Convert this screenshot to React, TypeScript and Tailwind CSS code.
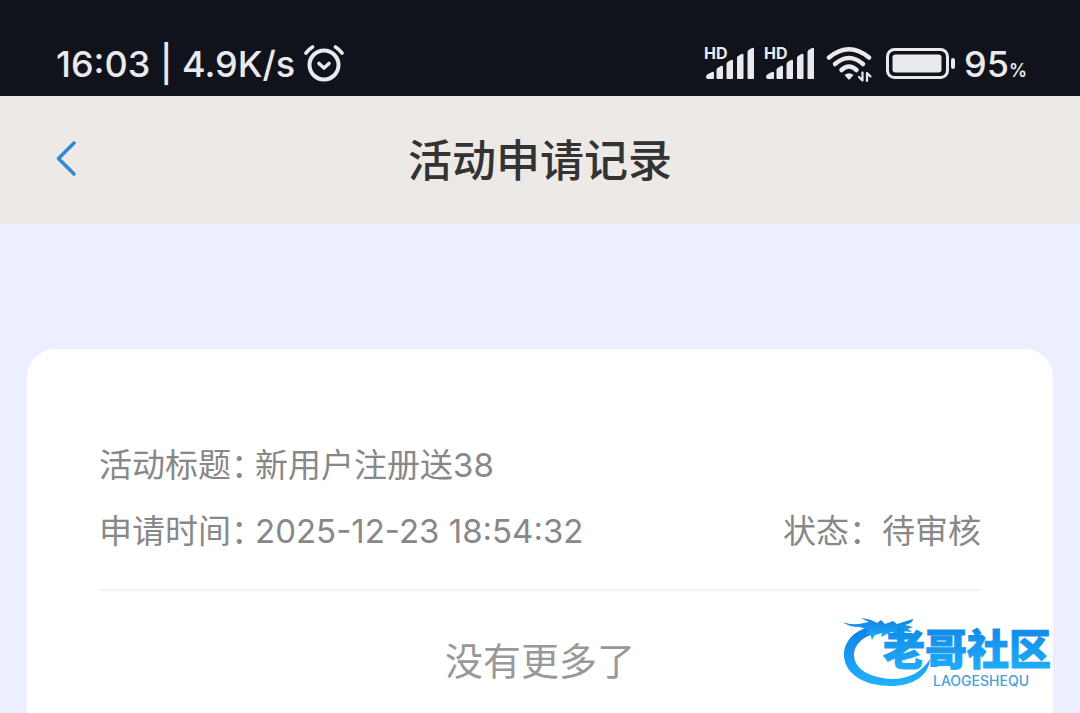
const record = {
	title: "新用户注册送38",
	time: "2025-12-23 18:54:32",
	status: "待审核",
};

function AlarmIcon() {
	return (
		<svg
			width="42"
			height="40"
			viewBox="0 0 42 40"
			fill="none"
			stroke="currentColor"
			strokeLinecap="round"
			strokeLinejoin="round"
			aria-hidden="true"
		>
			<circle cx="21" cy="21" r="14.5" strokeWidth="4" />
			<path d="M16 19.5l5 4.500 5-4.500" strokeWidth="3.6" />
			<path d="M3 9Q5.500 5.500 9.500 3M39 9Q36.500 5.500 32.500 3" strokeWidth="3.8" />
		</svg>
	);
}

function SignalIcon() {
	return (
		<svg
			className="overflow-visible"
			width="50"
			height="36"
			viewBox="0 0 50 36"
			fill="currentColor"
			aria-hidden="true"
		>
			<text x="0" y="13" fontSize="16" fontWeight="700" fontFamily="Inter, sans-serif">
				HD
			</text>
			<path d="M2 31q0-2 2-3l4-2q2-1 2 1v5q0 1-1 1H4q-2 0-2-2z" />
			<path d="M12.500 24q0-1 1-2l3.500-2q2-1 2 1v11q0 1-1 1h-4.500q-1 0-1-1z" />
			<path d="M22.500 18q0-1 1-2l3.500-2q2-1 2 1v17q0 1-1 1h-4.500q-1 0-1-1z" />
			<path d="M33 12q0-1 1-2l3.500-2q2-1 2 1v23q0 1-1 1h-4.500q-1 0-1-1z" />
			<path d="M43.500 6q0-1 1-2l3.500-2q2-1 2 1v29q0 1-1 1h-4.500q-1 0-1-1z" />
		</svg>
	);
}

function WifiIcon() {
	return (
		<svg
			width="48"
			height="38"
			viewBox="0 0 48 38"
			fill="none"
			stroke="currentColor"
			strokeLinecap="round"
			strokeLinejoin="round"
			aria-hidden="true"
		>
			<path d="M3 12.500Q23-4 43 12.500" strokeWidth="4.500" />
			<path d="M9 19Q23 7 37 19" strokeWidth="4.500" />
			<path d="M15.500 25Q23 18 30.500 25" strokeWidth="4.500" />
			<path d="M18.500 30Q23 26.500 27.500 30L24 34Q23 35 22 34z" fill="currentColor" stroke="none" />
			<path d="M36.500 27.500v8l-3.500-3.500M41 36v-8l3.500 3.500" strokeWidth="2.200" />
		</svg>
	);
}

function BatteryIcon() {
	return (
		<svg width="70" height="32" viewBox="0 0 70 32" fill="currentColor" aria-hidden="true">
			<rect x="1.500" y="1.500" width="60" height="28" rx="7" fill="none" stroke="currentColor" strokeWidth="3" />
			<rect x="6.500" y="6.500" width="49" height="18" rx="3" />
			<rect x="65" y="10" width="4" height="11" rx="2" />
		</svg>
	);
}

function StatusBar() {
	return (
		<div className="flex h-24 items-center justify-between bg-[#10131b] pt-8 pr-[53px] pl-14 font-[Inter,sans-serif] text-4xl font-medium text-[#e9eaee]">
			<div className="flex items-center gap-2">
				<span>16:03 | 4.9K/s</span>
				<AlarmIcon />
			</div>
			<div className="flex items-center">
				<div className="mr-3 flex gap-2.5">
					<SignalIcon />
					<SignalIcon />
				</div>
				<WifiIcon />
				<div className="mr-2 ml-3">
					<BatteryIcon />
				</div>
				<span>
					95<span className="text-lg font-semibold">%</span>
				</span>
			</div>
		</div>
	);
}

function Header() {
	return (
		<header className="grid h-[127px] grid-cols-[1fr_auto_1fr] items-center bg-[#ede9e6] px-14 pb-1">
			<button type="button" aria-label="返回" className="w-fit">
				<svg
					width="22"
					height="36"
					viewBox="0 0 22 36"
					fill="none"
					stroke="#3187d3"
					strokeWidth="3.500"
					strokeLinecap="round"
					strokeLinejoin="round"
				>
					<path d="M18 3L2.500 18.500 18 34" />
				</svg>
			</button>
			<h1 className="text-[44px] font-medium text-[#333]">活动申请记录</h1>
		</header>
	);
}

function Field({ label, value }: { label: string; value: string }) {
	return (
		<div className="flex">
			<dt className="w-[156px] whitespace-nowrap [font-feature-settings:'halt']">{label}：</dt>
			<dd>{value}</dd>
		</div>
	);
}

function Watermark() {
	return (
		<div className="absolute right-4 bottom-5">
			<svg width="222" height="78" viewBox="0 0 222 78" role="img" aria-label="老哥社区">
				<defs>
					<linearGradient id="blue" x1="0" y1="0" x2="0" y2="1">
						<stop offset="0" stopColor="#0d80e2" />
						<stop offset="1" stopColor="#22b2fb" />
					</linearGradient>
				</defs>
				<g fill="url(#blue)">
					<path d="M21 14C7 20 1 31 2 42C4 60 23 71 49 71C70 71 87 61 88 44C80 57 67 64 50 64C28 63 12 54 12 40C12 30 20 22 34 18L42 9Z" />
					<path d="M1 7Q10 11 22 8L27 7 19 3Q29 4 35 8L39 5 43 9 51 6 55 9 71 4Q71 8 63 10L71 12 66 14 70 17 60 16 60 20Q54 20 50 17L45 19 39 22 40 18 33 20 30 25 28 19 24 19 26 15 18 12Q6 12 1 7z" />
				</g>
				<text x="41" y="50" fontSize="42" fontWeight="900" fill="url(#blue)" stroke="url(#blue)">
					老哥社区
				</text>
				<text x="91" y="71" fontSize="14" fontWeight="500" fontFamily="Inter, sans-serif" fill="#4a9fda">
					LAOGESHEQU
				</text>
			</svg>
		</div>
	);
}

export default function App() {
	return (
		<div className="relative flex min-h-screen flex-col bg-[#ecefff] font-['Noto_Sans_CJK_SC',sans-serif]">
			<StatusBar />
			<Header />
			<main className="mx-[27px] mt-[126px] flex-1 rounded-t-[28px] bg-white px-[72px] pt-[83px] font-[Inter,'Noto_Sans_CJK_SC',sans-serif]">
				<dl className="border-b-2 border-[#f4f4f4] pb-[25px] text-[33px] leading-[66px] text-[#888]">
					<Field label="活动标题" value={record.title} />
					<div className="flex justify-between">
						<Field label="申请时间" value={record.time} />
						<div className="flex">
							<dt>状态：</dt>
							<dd>{record.status}</dd>
						</div>
					</div>
				</dl>
				<p className="pt-[42px] text-center text-[38px] leading-[56px] text-[#999]">没有更多了</p>
			</main>
			<Watermark />
		</div>
	);
}
